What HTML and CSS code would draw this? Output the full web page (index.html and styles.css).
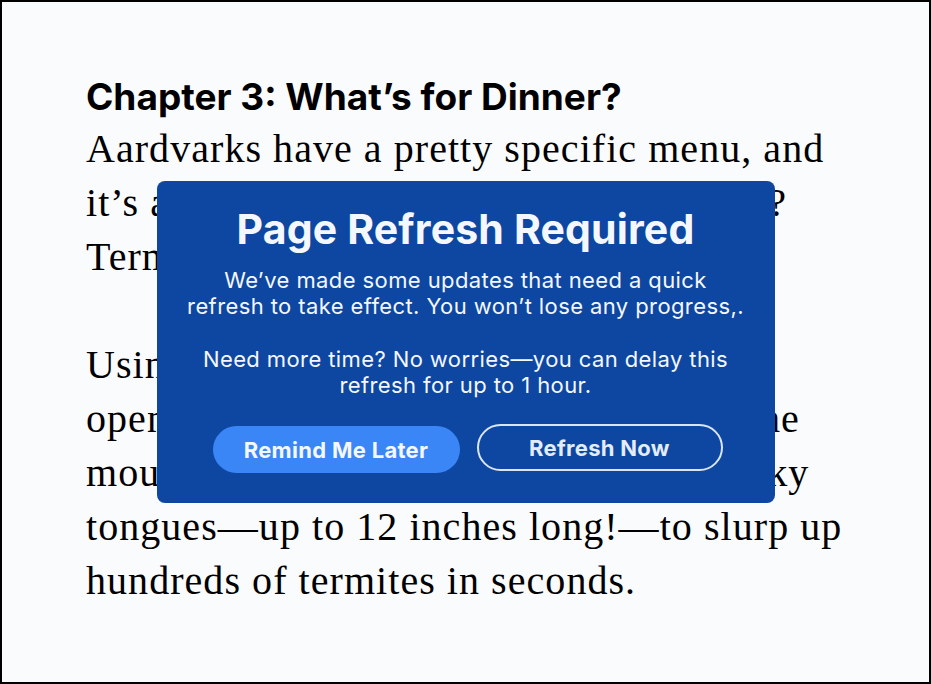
FILE: index.html
```html
<!DOCTYPE html>
<html lang="en">
<head>
<meta charset="utf-8">
<title>Chapter 3</title>
<link rel="stylesheet" href="styles.css">
</head>
<body>
<div class="frame">
  <article class="reader">
    <h1 class="chapter-title">Chapter 3: What’s for Dinner?</h1>
    <p class="reader-text">Aardvarks have a pretty specific menu, and it’s all about insects. What do they want? Termites and ants!</p>
    <p class="reader-text">Using their strong claws, aardvarks tear open termite nests and dig deep inside the mound. Then they unfurl their long, sticky tongues—up to 12 inches long!—to slurp up hundreds of termites in seconds.</p>
  </article>
</div>
<div class="overlay">
  <div class="modal" role="dialog" aria-labelledby="modal-title">
    <h2 class="modal-title" id="modal-title">Page Refresh Required</h2>
    <p class="modal-text">We’ve made some updates that need a quick refresh to take effect. You won’t lose any progress,.</p>
    <p class="modal-text">Need more time? No worries—you can delay this refresh for up to 1 hour.</p>
    <div class="modal-actions">
      <button class="btn btn-primary" type="button">Remind Me Later</button>
      <button class="btn btn-outline" type="button">Refresh Now</button>
    </div>
  </div>
</div>
</body>
</html>
```
FILE: styles.css
```css
html, body {
  margin: 0;
  padding: 0;
}
body {
  background: #fafbfd;
}
.frame {
  box-sizing: border-box;
  width: 931px;
  height: 684px;
  border: 2px solid #000;
  background: #fafbfd;
  padding: 70px 0 0 84px;
}
.reader {
  width: 760px;
}
.chapter-title {
  margin: 0;
  font-family: "Inter", "Roboto", sans-serif;
  font-weight: 700;
  font-size: 37px;
  line-height: 50px;
  color: #000;
  letter-spacing: 0;
}
.reader-text {
  margin: 0 0 54px;
  font-family: "Liberation Serif", serif;
  font-size: 40px;
  line-height: 54px;
  letter-spacing: 1.05px;
  color: #000;
}
.overlay {
  position: fixed;
  inset: 0;
  display: flex;
  align-items: center;
  justify-content: center;
}
.modal {
  box-sizing: border-box;
  width: 618px;
  height: 322px;
  background: #0d47a1;
  border-radius: 8px;
  padding: 22px 28px 0;
  text-align: center;
  color: #f4f7fd;
  font-family: "Inter", "Roboto", sans-serif;
}
.modal-title {
  margin: 0 0 12px;
  font-size: 41px;
  line-height: 52px;
  font-weight: 700;
  letter-spacing: 0.15px;
}
.modal-text {
  margin: 0 0 27px;
  font-size: 22px;
  line-height: 26px;
  font-weight: 400;
  letter-spacing: 0.4px;
}
.modal-actions {
  display: flex;
  align-items: flex-start;
  justify-content: center;
  gap: 17px;
  margin-top: -1px;
  padding-left: 4px;
}
.btn {
  box-sizing: border-box;
  width: 247px;
  height: 47px;
  border-radius: 24px;
  font-family: "Inter", "Roboto", sans-serif;
  font-size: 22px;
  font-weight: 700;
  letter-spacing: 0.3px;
  cursor: pointer;
}
.btn-primary {
  background: #3a86f7;
  border: none;
  color: #f4f7fd;
  margin-top: 2px;
}
.btn-outline {
  width: 246px;
  background: transparent;
  border: 2px solid #dbe5f5;
  color: #e3ecfb;
}
```
